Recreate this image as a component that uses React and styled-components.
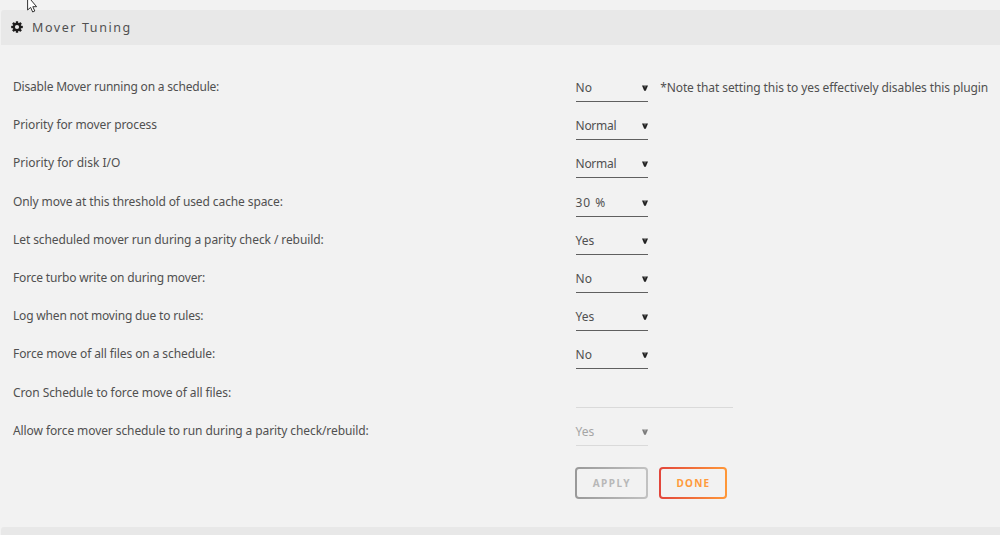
import styled, { createGlobalStyle } from "styled-components";

const rows = [
  {
    label: "Disable Mover running on a schedule:",
    tracking: -0.19,
    value: "No",
    note: "*Note that setting this to yes effectively disables this plugin",
  },
  { label: "Priority for mover process", tracking: -0.09, value: "Normal", valueTracking: -0.3 },
  { label: "Priority for disk I/O", tracking: 0, value: "Normal", valueTracking: -0.3 },
  {
    label: "Only move at this threshold of used cache space:",
    tracking: -0.1,
    value: "30 %",
    valueTracking: 0.9,
  },
  { label: "Let scheduled mover run during a parity check / rebuild:", tracking: -0.09, value: "Yes" },
  { label: "Force turbo write on during mover:", tracking: -0.17, value: "No" },
  { label: "Log when not moving due to rules:", tracking: -0.18, value: "Yes" },
  { label: "Force move of all files on a schedule:", tracking: -0.1, value: "No" },
  { label: "Cron Schedule to force move of all files:", tracking: -0.09, input: true },
  {
    label: "Allow force mover schedule to run during a parity check/rebuild:",
    tracking: -0.09,
    value: "Yes",
    disabled: true,
  },
];

function Gear() {
  return (
    <svg width="12" height="12" viewBox="-6 -6 12 12">
      {[0, 45, 90, 135].map((a) => (
        <rect key={a} x="-1.2" y="-5.8" width="2.4" height="11.6" rx="0.4" fill="#1c1b1b" transform={`rotate(${a})`} />
      ))}
      <circle r="4.2" fill="#1c1b1b" />
      <circle r="2.1" fill="#e8e8e8" />
    </svg>
  );
}

function Arrow() {
  return (
    <svg width="6" height="7" viewBox="0 0 6 7">
      <path d="M0 0.5H6L3.8 5.8H2.2Z" fill="currentColor" />
      <path d="M3 0.5V2.4" stroke="#f2f2f2" strokeWidth="0.5" />
    </svg>
  );
}

function SettingRow({ label, tracking, value, valueTracking = 0, note, input, disabled }) {
  return (
    <Row>
      <Label $tracking={tracking}>{label}</Label>
      {input ? (
        <TextInput />
      ) : (
        <Select $disabled={disabled} $tracking={valueTracking}>
          <span>{value}</span>
          <Arrow />
        </Select>
      )}
      {note && <Note>{note}</Note>}
    </Row>
  );
}

export default function App() {
  return (
    <Page>
      <GlobalStyle />
      <Cursor width="12" height="13" viewBox="0 0 12 13">
        <path d="M0.6 -4V10L3.6 7.4L5.7 12L7.8 11L5.8 6.7H9.6Z" fill="#fff" stroke="#333" />
      </Cursor>
      <TitleBar>
        <Gear />
        <Title>Mover Tuning</Title>
      </TitleBar>
      <Form>
        {rows.map((row) => (
          <SettingRow key={row.label} {...row} />
        ))}
        <Buttons>
          <Button $disabled>APPLY</Button>
          <Button>DONE</Button>
        </Buttons>
      </Form>
      <NextBar />
    </Page>
  );
}

const GlobalStyle = createGlobalStyle`
  * {
    box-sizing: border-box;
  }
  body {
    margin: 0;
    background: #f2f2f2;
  }
`;
const Page = styled.div`
  position: relative;
  display: flex;
  flex-direction: column;
  height: 535px;
  padding: 10px 0 0 1px;
  overflow: hidden;
  background: #f2f2f2;
  color: #505050;
  font-family: "Noto Sans", sans-serif;
  font-size: 12px;
  line-height: 16px;
`;
const Cursor = styled.svg`
  position: absolute;
  left: 27px;
  top: 0;
`;
const TitleBar = styled.header`
  display: flex;
  align-items: center;
  gap: 9px;
  height: 35px;
  padding: 0 0 1px 10px;
  border-radius: 3px 0 0 0;
  background: #e8e8e8;
`;
const Title = styled.h1`
  margin: 0;
  padding-top: 2px;
  font-size: 12.5px;
  font-weight: 400;
  letter-spacing: 1.58px;
`;
const Form = styled.main`
  flex: 1;
  padding: 19px 0 0 12px;
`;
const Row = styled.div`
  display: flex;
  height: 38.2px;
  padding-top: 14px;
`;
const Label = styled.label`
  width: 562.6px;
  padding-top: 1px;
  letter-spacing: ${({ $tracking }) => $tracking}px;
  white-space: nowrap;
`;
const Select = styled.div`
  display: flex;
  justify-content: space-between;
  width: 72px;
  height: 24px;
  padding-top: 2px;
  border-bottom: 1px solid ${({ $disabled }) => ($disabled ? "#dadada" : "#606060")};
  color: ${({ $disabled }) => ($disabled ? "#a5a5a5" : "#505050")};
  letter-spacing: ${({ $tracking }) => $tracking}px;
  svg {
    margin-top: 5px;
    color: ${({ $disabled }) => ($disabled ? "#7c7c7c" : "#222")};
  }
`;
const TextInput = styled.input`
  width: 157px;
  height: 24px;
  padding: 0;
  border: 0;
  border-bottom: 1px solid #dadada;
  background: transparent;
`;
const Note = styled.span`
  padding: 2px 0 0 12.6px;
  letter-spacing: -0.1px;
  white-space: nowrap;
`;
const Buttons = styled.div`
  display: flex;
  gap: 11px;
  padding: 21px 0 0 562.4px;
`;
const Button = styled.button`
  width: ${({ $disabled }) => ($disabled ? "73px" : "68px")};
  height: 32px;
  padding: 0;
  border: 2px solid transparent;
  border-radius: 4px;
  background:
    linear-gradient(#f2f2f2, #f2f2f2) padding-box,
    ${({ $disabled }) =>
      $disabled
        ? "linear-gradient(90deg, #999, #c2c2c2) border-box"
        : "linear-gradient(90deg, #e2453b, #ff9838) border-box"};
  color: ${({ $disabled }) => ($disabled ? "#b8b8b8" : "#ff9a3c")};
  font-family: "Noto Sans", sans-serif;
  font-size: 10px;
  font-weight: 700;
  letter-spacing: ${({ $disabled }) => ($disabled ? "1.5px" : "1.2px")};
`;
const NextBar = styled.div`
  height: 8px;
  border-radius: 3px 0 0 0;
  background: #e8e8e8;
`;
